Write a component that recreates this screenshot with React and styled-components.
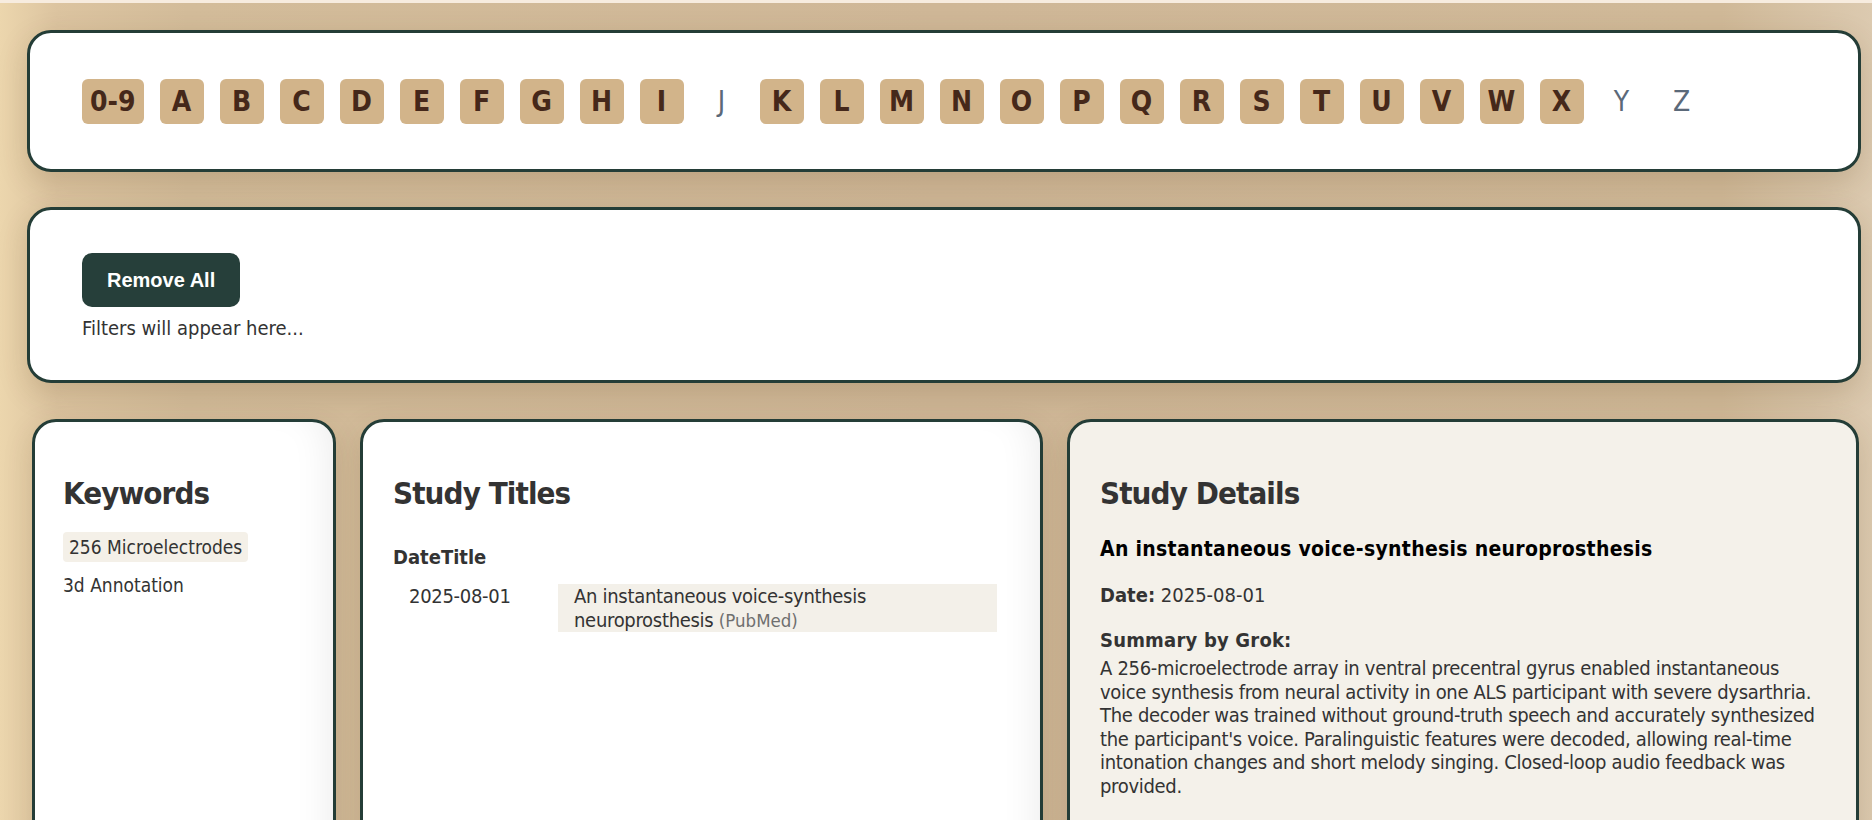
import styled, { createGlobalStyle } from 'styled-components';

const GlobalStyle = createGlobalStyle`
  html, body {
    margin: 0;
    padding: 0;
  }
  body {
    border-top: 3px solid #f7ecdf;
    min-height: 100vh;
    background: linear-gradient(90deg, #ecd6ad 0%, #dcc4a0 3%, #d3bc9a 10%, #cfb797 50%, #d0b998 92%, #dccab0 100%);
    font-family: "DejaVu Sans Condensed", "DejaVu Sans", Tahoma, sans-serif;
    color: #333;
  }
`;

const Page = styled.div`
  padding: 27px 11px 0 27px;
  display: flex;
  flex-direction: column;
  gap: 35px;
`;

const Card = styled.div`
  box-sizing: border-box;
  border: 3px solid #243d37;
  border-radius: 24px;
  background: #fff;
  box-shadow: 0 10px 30px rgba(90, 60, 20, 0.18);
`;

const LetterBar = styled(Card)`
  height: 142px;
  padding: 0 52px;
  display: flex;
  align-items: center;
  gap: 16px;
`;

const Letter = styled.span`
  box-sizing: border-box;
  height: 45px;
  min-width: 44px;
  padding: 0 8px;
  border-radius: 6px;
  display: flex;
  align-items: center;
  justify-content: center;
  font-size: 28px;
  font-weight: ${p => (p.$active ? 700 : 400)};
  color: ${p => (p.$active ? '#45281a' : '#5b6979')};
  background: ${p => (p.$active ? '#d2b48a' : 'transparent')};
  cursor: ${p => (p.$active ? 'pointer' : 'default')};
`;

const FilterBox = styled(Card)`
  height: 176px;
  padding: 43px 52px 0;
  display: flex;
  flex-direction: column;
  align-items: flex-start;
`;

const RemoveButton = styled.button`
  border: none;
  border-radius: 10px;
  background: #263f3a;
  color: #fff;
  font-family: "Liberation Sans", Arial, sans-serif;
  font-weight: 700;
  font-size: 20px;
  line-height: 24px;
  padding: 15px 25px;
  cursor: pointer;
`;

const FilterHint = styled.p`
  margin: 9px 0 0;
  font-size: 20px;
  line-height: 24px;
  color: #333;
`;

const Columns = styled.div`
  display: grid;
  grid-template-columns: 304px 683px 1fr;
  column-gap: 24px;
  margin: 1px 2px 0 5px;
`;

const Panel = styled(Card)`
  min-height: 520px;
  padding: 52px 30px 30px ${p => p.$inset || 30}px;
  background: ${p => (p.$tinted ? '#f4f1ea' : '#fff')};
  box-shadow: ${p =>
    p.$tinted
      ? '0 10px 30px rgba(90, 60, 20, 0.15)'
      : 'inset -26px 0 40px -26px rgba(0, 0, 0, 0.09), 0 10px 30px rgba(90, 60, 20, 0.15)'};
`;

const Heading = styled.h2`
  margin: 0;
  font-size: 31px;
  line-height: 38px;
  font-weight: 700;
  letter-spacing: -0.9px;
  color: #333;
`;

const KeywordList = styled.ul`
  list-style: none;
  margin: 20px 0 0;
  padding: 0;
  display: flex;
  flex-direction: column;
  align-items: flex-start;
  gap: 8px;
`;

const Keyword = styled.li`
  font-size: 19px;
  line-height: 24px;
  padding: 3px ${p => (p.$selected ? '6px' : '0')};
  border-radius: 4px;
  background: ${p => (p.$selected ? '#f4f0e8' : 'transparent')};
  color: #333;
  cursor: pointer;
`;

const TableHead = styled.div`
  margin-top: 33px;
  font-size: 20px;
  line-height: 24px;
  font-weight: 700;
  color: #333;
`;

const TableRow = styled.div`
  margin-top: 15px;
  display: grid;
  grid-template-columns: 165px 439px;
  font-size: 20px;
  line-height: 24px;
  letter-spacing: -0.3px;
  color: #333;
`;

const Cell = styled.div`
  padding: 0 16px;
  background: ${p => (p.$highlight ? '#f3f0e9' : 'transparent')};
`;

const Source = styled.span`
  font-size: 18.5px;
  line-height: 20px;
  letter-spacing: 0;
  color: #6f6f6f;
`;

const DetailTitle = styled.h3`
  margin: 25px 0 0;
  font-size: 21px;
  line-height: 24px;
  font-weight: 700;
  letter-spacing: 0.3px;
  color: #000;
`;

const DetailLine = styled.div`
  margin-top: 22px;
  font-size: 20px;
  line-height: 24px;
  color: #333;

  b {
    font-weight: 700;
  }
`;

const SummaryLabel = styled.div`
  margin-top: 21px;
  margin-bottom: 5px;
  font-size: 20px;
  line-height: 24px;
  font-weight: 700;
  letter-spacing: 0.2px;
  color: #333;
`;

const Summary = styled.p`
  margin: 0;
  font-size: 20px;
  line-height: 23.6px;
  letter-spacing: -0.32px;
  color: #333;
`;

const letters = ['0-9', 'A', 'B', 'C', 'D', 'E', 'F', 'G', 'H', 'I', 'J', 'K', 'L', 'M', 'N', 'O', 'P', 'Q', 'R', 'S', 'T', 'U', 'V', 'W', 'X', 'Y', 'Z'];
const empty = ['J', 'Y', 'Z'];

const keywords = ['256 Microelectrodes', '3d Annotation'];

const App = () => {
  return (
    <>
      <GlobalStyle />
      <Page>
        <LetterBar>
          {letters.map(l => (
            <Letter key={l} $active={!empty.includes(l)}>{l}</Letter>
          ))}
        </LetterBar>

        <FilterBox>
          <RemoveButton>Remove All</RemoveButton>
          <FilterHint>Filters will appear here...</FilterHint>
        </FilterBox>

        <Columns>
          <Panel $inset={28}>
            <Heading>Keywords</Heading>
            <KeywordList>
              {keywords.map((k, i) => (
                <Keyword key={k} $selected={i === 0}>{k}</Keyword>
              ))}
            </KeywordList>
          </Panel>

          <Panel>
            <Heading>Study Titles</Heading>
            <TableHead>
              <span>Date</span>
              <span>Title</span>
            </TableHead>
            <TableRow>
              <Cell>2025-08-01</Cell>
              <Cell $highlight>
                An instantaneous voice-synthesis neuroprosthesis <Source>(PubMed)</Source>
              </Cell>
            </TableRow>
          </Panel>

          <Panel $tinted>
            <Heading>Study Details</Heading>
            <DetailTitle>An instantaneous voice-synthesis neuroprosthesis</DetailTitle>
            <DetailLine><b>Date:</b> 2025-08-01</DetailLine>
            <SummaryLabel>Summary by Grok:</SummaryLabel>
            <Summary>
              A 256-microelectrode array in ventral precentral gyrus enabled instantaneous voice synthesis from neural activity in one ALS participant with severe dysarthria. The decoder was trained without ground-truth speech and accurately synthesized the participant's voice. Paralinguistic features were decoded, allowing real-time intonation changes and short melody singing. Closed-loop audio feedback was provided.
            </Summary>
          </Panel>
        </Columns>
      </Page>
    </>
  );
};

export default App;
